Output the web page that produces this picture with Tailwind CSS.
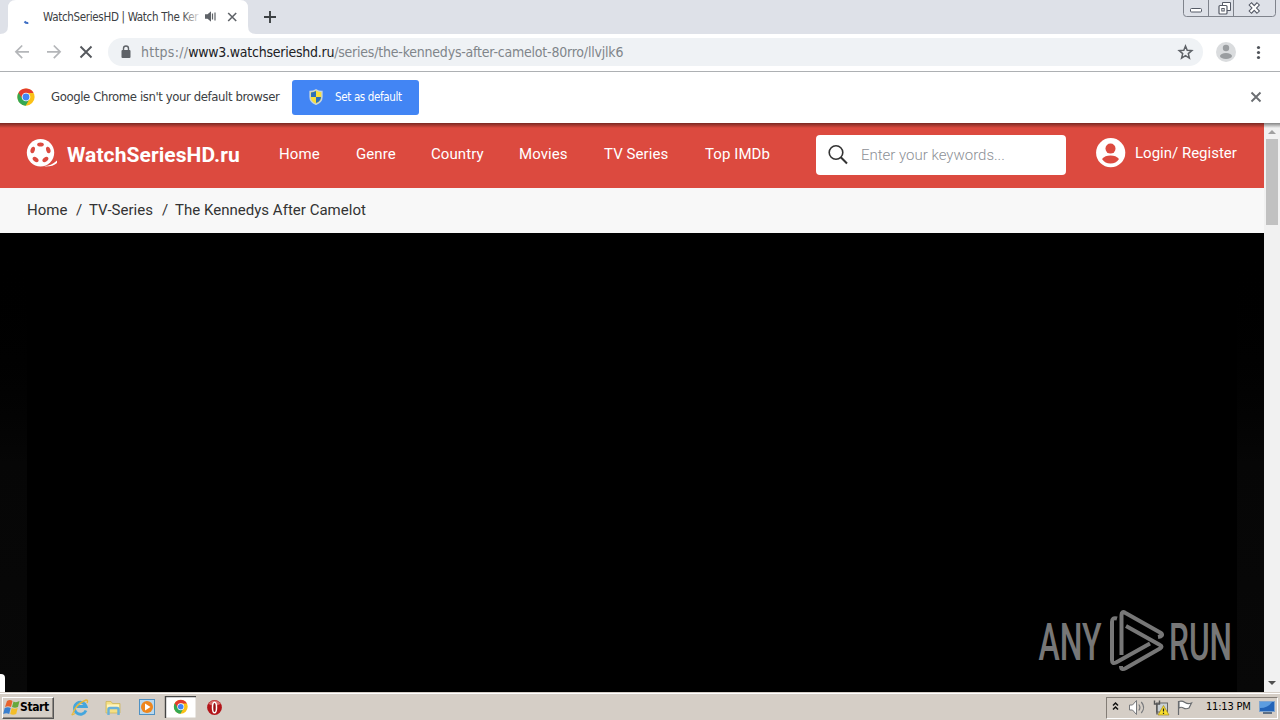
<!DOCTYPE html>
<html lang="en">
<head>
  <meta charset="UTF-8">
  <title>WatchSeriesHD | Watch The Kennedys After Camelot</title>
  <script src="https://cdn.jsdelivr.net/npm/@tailwindcss/browser@4"></script>
</head>
<body class="w-[1280px] h-[720px] overflow-hidden flex flex-col bg-white font-['DejaVu_Sans_Condensed','DejaVu_Sans',sans-serif] whitespace-nowrap">

  <!-- Shared symbols -->
  <svg class="hidden">
    <symbol id="chrome" viewBox="0 0 48 48">
      <circle cx="24" cy="24" r="23" fill="#fbc116"/>
      <path d="M24 24 4.1 12.5A23 23 0 0 0 23 47l10-17z" fill="#34a853"/>
      <path d="M4.1 12.5A23 23 0 0 1 43.9 12.5V13.5H24L14 28z" fill="#e33b2e"/>
      <circle cx="24" cy="24" r="11.5" fill="#fff"/>
      <circle cx="24" cy="24" r="9.2" fill="#4285f4"/>
    </symbol>
  </svg>

  <!-- Tab strip -->
  <div class="relative h-[34px] shrink-0 bg-[#dee1e8] flex">
    <svg class="w-[256px] h-[34px] shrink-0" viewBox="0 0 256 34">
      <path d="M0 34Q8 34 8 26V8Q8 0 16 0H240Q248 0 248 8V26Q248 34 256 34z" fill="#fff"/>
      <path d="M24.500 21.500Q26 23.300 28.300 23" stroke="#3f6fc4" stroke-width="2" fill="none"/>
      <path d="M205 14.500h2.500l3.500-3v10l-3.500-3H205z" fill="#5f6368"/>
      <path d="M212.500 13.500v6M215 12.500v8" stroke="#5f6368" stroke-width="1.200"/>
      <path d="M228.200 13l8 8M236.200 13l-8 8" stroke="#5f6368" stroke-width="1.600"/>
    </svg>
    <div class="absolute left-[43px] top-[9px] w-[162px] text-[11.5px] leading-4 text-[#3c4043] tracking-[-0.320px]">WatchSeriesHD | Watch The Ker
      <span class="absolute right-0 top-0 w-6 h-4 bg-linear-to-r from-white/0 to-white to-90%"></span>
    </div>
    <svg class="w-7 h-[34px]" viewBox="0 0 28 34"><path d="M8 17h12M14 11v12" stroke="#3c4043" stroke-width="1.900"/></svg>
    <!-- Audio indicator sits above the title fade -->
    <svg class="absolute left-[204px] top-0 w-3 h-[34px]" viewBox="204 0 12 34">
      <path d="M205 14.500h2.500l3.500-3v10l-3.500-3H205z" fill="#5f6368"/>
    </svg>
    <!-- Window controls -->
    <svg class="absolute right-0 top-0 w-[98px] h-[18px]" viewBox="0 0 98 18">
      <path d="M1.500 0V13.500Q1.500 16.500 4.500 16.500H90.500Q93.500 16.500 93.500 13.500V0M26.500 0V16M51.500 0V16" fill="none" stroke="#7f838c"/>
      <rect x="8.500" y="8.500" width="11" height="3.500" rx="1" fill="#fff" stroke="#555a66"/>
      <path d="M40.500 5.500V2.500H48.500V10.500H45" fill="#fff" stroke="#555a66"/>
      <rect x="37" y="5.500" width="8" height="8.500" rx="1" fill="#fff" stroke="#555a66" stroke-width="1.200"/>
      <rect x="39.800" y="8.500" width="2.400" height="2.500" fill="none" stroke="#555a66"/>
      <path d="M68 3.500l8.500 9M76.500 3.500l-8.500 9" stroke="#555a66" stroke-width="4.400"/>
      <path d="M68.600 4.200l7.300 7.600M75.900 4.200l-7.300 7.600" stroke="#fff" stroke-width="2.200"/>
    </svg>
  </div>

  <!-- Toolbar -->
  <div class="h-[38px] shrink-0 flex items-center border-b border-[#adb0b3] pb-px">
    <svg class="w-[108px] h-9 shrink-0" viewBox="0 34 108 36" fill="none" stroke-width="1.700">
      <path d="M29 51.800H16M22.200 45.500L15.900 51.800L22.200 58.100" stroke="#b4b6b9"/>
      <path d="M47 51.800H60M53.800 45.500L60.100 51.800L53.800 58.100" stroke="#b4b6b9"/>
      <path d="M80.500 46.500l11 11M91.500 46.500l-11 11" stroke="#55585d" stroke-width="1.900"/>
    </svg>
    <div class="w-[1095px] h-7 rounded-full bg-[#eff2f5] flex items-center shrink-0">
      <svg class="w-[33px] h-7" viewBox="0 0 33 28">
        <rect x="13.500" y="12" width="9" height="8" rx="1" fill="#5f6368"/>
        <path d="M15.500 12.500V10.500a2.500 2.500 0 0 1 5 0v2" fill="none" stroke="#5f6368" stroke-width="1.400"/>
      </svg>
      <div class="grow text-[14px] text-[#80858a]"><span class="tracking-[0.250px]">https://</span><span class="text-[#202124] tracking-[-0.250px]">www3.watchserieshd.ru</span><span class="tracking-[-0.210px]">/series/the-kennedys-after-camelot-80rro/llvjlk6</span></div>
      <svg class="w-9 h-7" viewBox="0 0 36 28"><path d="M18.500 8l1.700 4.300 4.600.3-3.500 3 1.100 4.500-3.900-2.500-3.900 2.500 1.100-4.500-3.500-3 4.600-.3z" fill="none" stroke="#5f6368" stroke-width="1.500"/></svg>
    </div>
    <svg class="w-[77px] h-9" viewBox="1203 34 77 36">
      <circle cx="1226" cy="52" r="10" fill="#dadcde"/>
      <circle cx="1226" cy="48" r="3.200" fill="#9a9da0"/>
      <ellipse cx="1226" cy="56" rx="6" ry="3" fill="#9a9da0"/>
      <g fill="#50545a"><circle cx="1258.500" cy="47.500" r="1.600"/><circle cx="1258.500" cy="52.500" r="1.600"/><circle cx="1258.500" cy="57.500" r="1.600"/></g>
    </svg>
  </div>

  <!-- Default browser bar -->
  <div class="h-[51px] shrink-0 flex items-center pl-[17px] pr-[18px]">
    <svg class="w-[18px] h-[18px] -mt-px"><use href="#chrome"/></svg>
    <div class="w-[241px] ml-4 -mt-0.5 text-[13px] text-[#3c4043] tracking-[-0.400px]">Google Chrome isn't your default browser</div>
    <div class="w-[127px] h-[35px] rounded-[3px] bg-[#4285f4] flex items-center pl-[17px] text-white text-[11.5px]">
      <svg class="w-[14px] h-4 mr-3 -mt-px" viewBox="0 0 14 16">
        <path d="M7 .7Q9.500 2.500 13 2.500V8Q13 13 7 15.300 1 13 1 8V2.500Q4.500 2.500 7 .7z" fill="#f7df3c" stroke="#c5d3df" stroke-width="1.300"/>
        <path d="M7 2Q4.800 3.400 2 3.500V8H7zM7 8H12Q12 12 7 14z" fill="#2d6fb8"/>
      </svg>
      <span class="tracking-[-0.350px]">Set as default</span>
    </div>
    <svg class="ml-auto w-3 h-3 -mt-px" viewBox="0 0 12 12"><path d="M1.500 1.500l9 9M10.500 1.500l-9 9" stroke="#6b6e72" stroke-width="1.900"/></svg>
  </div>

  <!-- Page -->
  <div class="relative flex h-[569px] shrink-0">
    <div class="w-[1264px] flex flex-col font-[Roboto,sans-serif]">
      <header class="h-[65px] shrink-0 bg-[#dc4a3f] flex items-start text-white text-[15px]">
        <svg class="ml-[26px] mt-[15px] w-8 h-8 shrink-0" viewBox="0 0 32 32">
          <circle cx="14.500" cy="14.800" r="13.700" fill="#fff"/>
          <path d="M18 28Q25 28 31 22.500V25Q27 28.500 20 28.500z" fill="#fff"/>
          <g fill="#dc4a3f">
            <ellipse cx="14.500" cy="6.500" rx="3.300" ry="2.100"/>
            <ellipse cx="22.300" cy="12" rx="3.300" ry="2.100" transform="rotate(72 22.300 12)"/>
            <ellipse cx="19.400" cy="21.500" rx="3.300" ry="2.100" transform="rotate(144 19.400 21.500)"/>
            <ellipse cx="9.600" cy="21.500" rx="3.300" ry="2.100" transform="rotate(216 9.600 21.500)"/>
            <ellipse cx="6.700" cy="12" rx="3.300" ry="2.100" transform="rotate(288 6.700 12)"/>
          </g>
        </svg>
        <div class="ml-[9px] mt-5 w-[212px] text-[21px] leading-6 font-bold tracking-[0.080px]">WatchSeriesHD.ru</div>
        <nav class="flex mt-[21px] leading-5 tracking-[0.080px]">
          <a class="w-[77px]">Home</a>
          <a class="w-[75px]">Genre</a>
          <a class="w-[88px]">Country</a>
          <a class="w-[85px]">Movies</a>
          <a class="w-[101px]">TV Series</a>
          <a class="w-[111px]">Top IMDb</a>
        </nav>
        <div class="mt-3 w-[250px] h-10 rounded-[4px] bg-white flex items-center shrink-0">
          <svg class="w-[45px] h-10" viewBox="0 0 45 40" fill="none" stroke="#333"><circle cx="20" cy="17.500" r="6.800" stroke-width="1.600"/><path d="M24.800 22.300L31 28.500" stroke-width="2"/></svg>
          <span class="text-[15px] font-light text-[#8d9096]">Enter your keywords...</span>
        </div>
        <svg class="ml-[30px] mt-[15px] w-[30px] h-[30px] shrink-0" viewBox="0 0 30 30">
          <circle cx="14.700" cy="14.700" r="14.600" fill="#fff"/>
          <circle cx="14.500" cy="10.600" r="5" fill="#dc4a3f"/>
          <path d="M6 21Q9 17.600 14.500 17.600T23 21Q20 25.500 14.500 25.500T6 21z" fill="#dc4a3f"/>
        </svg>
        <div class="ml-[9px] mt-5 leading-5">Login/ Register</div>
      </header>
      <div class="h-[45px] shrink-0 bg-[#f8f8f8] flex items-center pl-[27px] text-[15px] text-[#333] tracking-[0.020px]">
        <span class="w-[49px]">Home</span><span class="w-[13px]">/</span><span class="w-[73px]">TV-Series</span><span class="w-[13px]">/</span><span>The Kennedys After Camelot</span>
      </div>
      <!-- Player -->
      <div class="relative grow bg-linear-to-b from-black via-[#060606] via-50% to-[#080808] px-[27px]">
        <div class="h-full bg-black"></div>
        <div class="absolute left-0 bottom-0 w-[5px] h-[18px] rounded-tr-[4px] bg-white"></div>
        <!-- ANY.RUN watermark -->
        <svg class="absolute left-[1030px] top-[371px] w-[210px] h-[74px]" viewBox="1030 604 210 74">
          <g fill="#777" font-family="Roboto" font-size="51" font-weight="500">
            <text x="1038.500" y="659.500" textLength="63" lengthAdjust="spacingAndGlyphs">ANY</text>
            <text x="1169" y="659.500" textLength="63" lengthAdjust="spacingAndGlyphs">RUN</text>
          </g>
          <g fill="none" stroke="#777" stroke-width="4" stroke-linejoin="round">
            <path d="M1117 618.500Q1112 617 1112 622V660Q1112 664.500 1116 662.500L1150 643.500"/>
            <path d="M1121.500 655V615Q1121.500 610.500 1125.500 613L1161 633Q1164 636 1158 637"/>
            <path d="M1126 626L1160 645Q1163 646.500 1160 648.500L1126 668Q1121 671 1121 666"/>
          </g>
        </svg>
      </div>
    </div>
    <!-- Scrollbar -->
    <div class="w-4 bg-[#f1f1f1] flex flex-col items-center">
      <svg class="w-4 h-4" viewBox="0 0 16 16"><path d="M4 11L8 7L12 11z" fill="#a0a0a0"/></svg>
      <div class="w-3 h-[86px] bg-[#c1c1c1]"></div>
      <svg class="w-4 h-4 mt-auto" viewBox="0 0 16 16"><path d="M4 5L8 9L12 5z" fill="#505050"/></svg>
    </div>
    <div class="absolute inset-x-0 top-0 h-[5px] bg-linear-to-b from-black/45 to-black/0"></div>
  </div>

  <!-- Taskbar -->
  <div class="relative h-7 shrink-0 bg-[#d5cec6] border-t border-[#d5cec6] shadow-[inset_0_1px_0_#fff] flex items-center pl-[2px] pt-[2px]">
    <div class="w-[52px] h-[22px] border border-t-white border-l-white border-r-[#555] border-b-[#555] shadow-[inset_-1px_-1px_0_#918b84] flex items-center text-[12px] font-bold text-black">
      <svg class="w-[17px] h-4 shrink-0" viewBox="0 0 17 16">
        <path d="M4 1Q7 -1 9.500 1L8 7Q5 5.500 2 7z" fill="#e8622c"/>
        <path d="M10.500 1.500Q13 3 16.500 1L15 7Q12 8.500 9 7z" fill="#67a83c"/>
        <path d="M1.700 8Q5 6.500 7.700 8L6.200 14Q3.500 12.500.2 14z" fill="#3a7fce"/>
        <path d="M8.700 8Q11.500 9.500 14.700 8L13.200 14Q10 15.500 7.200 14z" fill="#f3bd28"/>
      </svg>
      <span class="-mt-0.5 tracking-[-0.400px]">Start</span>
    </div>
    <!-- Quick launch icons -->
    <svg class="w-[176px] h-6 shrink-0" viewBox="54 696 176 24">
      <path d="M86 710.500A6 6 0 1 1 86.200 706.500H76.500" fill="none" stroke="#45a6dd" stroke-width="2.800"/>
      <path d="M73 713.500Q70.500 716 75 713.500M73 713Q76 704 86 700Q88.500 700 87 703" fill="none" stroke="#e8b93c" stroke-width="1.400"/>
      <path d="M106 701.500h5l1.500 2H120V713H106z" fill="#f5df83" stroke="#cdb65a" stroke-width=".8"/>
      <path d="M107 704.500h12v3h-12z" fill="#fff5bd"/>
      <path d="M108.500 715v-5.500Q108.500 708 110 708H117Q118.500 708 118.500 709.500V715" fill="none" stroke="#68b1da" stroke-width="2.400"/>
      <rect x="139.500" y="699.500" width="15" height="15" fill="#b9d8ee" stroke="#4f91c3"/>
      <circle cx="147" cy="707" r="6" fill="#ee861d"/>
      <path d="M145 703.500V710.500L150.500 707z" fill="#fff"/>
      <rect x="165.500" y="696.500" width="30" height="21" fill="#fff"/>
      <path d="M165.500 718V696.500H196" fill="none" stroke="#444" stroke-width="1.400"/>
      <use href="#chrome" x="173.500" y="699.500" width="14.500" height="14.500"/>
      <circle cx="214.500" cy="707.500" r="7.400" fill="#b3151a"/>
      <path d="M208.500 704A7 7 0 0 1 220.500 704Q214 707 208.500 704z" fill="#d96b6b"/>
      <ellipse cx="214.500" cy="707.500" rx="2" ry="5.300" fill="#991014" stroke="#fff" stroke-width="1.500"/>
    </svg>
    <!-- Tray -->
    <div class="ml-auto mr-[2px] w-[172px] h-[22px] border border-t-[#837d76] border-l-[#837d76] border-r-white border-b-white flex items-center">
      <svg class="w-[99px] h-5 shrink-0" viewBox="1107 697.500 99 20">
        <path d="M1113 705l2.500-2.500 2.500 2.500M1113 709l2.500-2.500 2.500 2.500" fill="none" stroke="#111" stroke-width="1.500"/>
        <path d="M1129.500 704.500h3l4-4.500v14l-4-4.500h-3z" fill="#fff" stroke="#77797c"/>
        <path d="M1138.800 704Q1141 707 1138.800 710M1141.300 701.500Q1146 707 1141.300 712.500" fill="none" stroke="#77797c" stroke-width="1.200"/>
        <rect x="1156.500" y="702.500" width="11" height="9" fill="#c9d0d4" stroke="#666"/>
        <path d="M1154.500 700v3.500h5V700M1157 703.500V714" fill="none" stroke="#555" stroke-width="1.400"/>
        <path d="M1163.500 705L1169 714.500H1158z" fill="#f9de2b" stroke="#a38b1d" stroke-width=".7"/>
        <path d="M1163.500 708v3M1163.500 712.200v1.200" stroke="#222" stroke-width="1.200"/>
        <path d="M1178.500 714.500V700.500M1179 701Q1182 700 1185 702Q1188 704 1191.500 702.500L1189 707.500Q1186 709 1183.500 707.500T1179 707.500z" fill="#fff" stroke="#696c6f" stroke-width="1.200"/>
      </svg>
      <span class="w-[53px] text-[11px] text-black tracking-[-0.200px]">11:13 PM</span>
      <svg class="w-4 h-4 shrink-0" viewBox="0 0 16 16">
        <rect x=".5" y="1.500" width="15" height="10" fill="#2364b8" stroke="#7fa5cf"/>
        <path d="M1 2H13Q9 8 1 8z" fill="#5c9de0"/>
        <path d="M4 13h9" stroke="#37516e" stroke-width="1.500"/>
      </svg>
    </div>
  </div>
</body>
</html>
